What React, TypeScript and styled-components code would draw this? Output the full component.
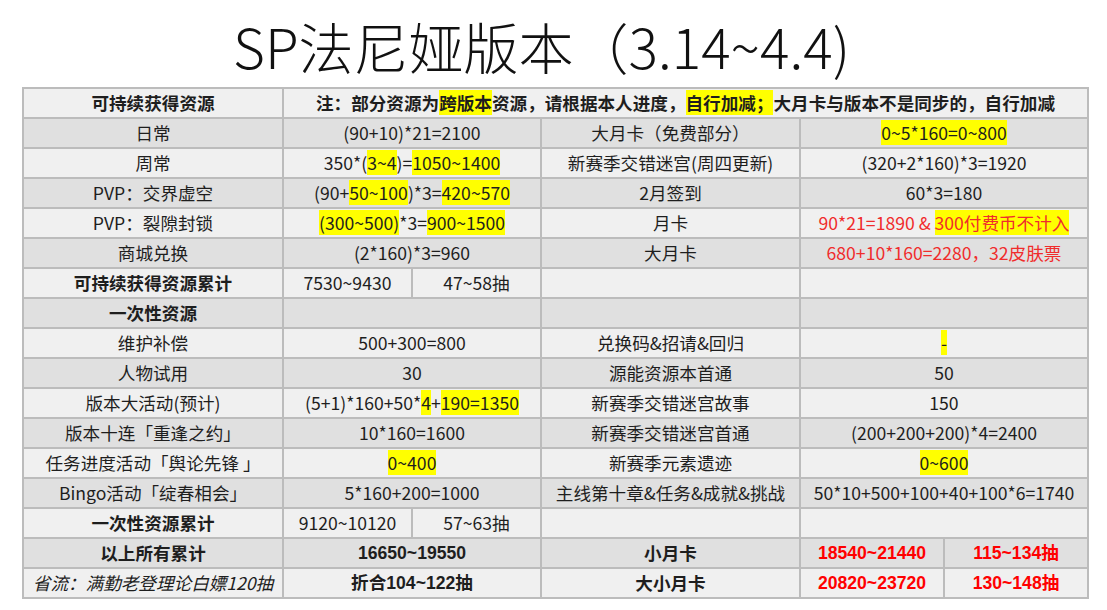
import React from "react";
import styled, { createGlobalStyle } from "styled-components";

const Global = createGlobalStyle`
  html, body { margin: 0; padding: 0; background: #ffffff; }
  body { font-family: "Noto Sans CJK SC", "Noto Sans", sans-serif; color: #1e1e1e; }
`;

const Page = styled.div`
  width: 1107px;
  height: 610px;
  overflow: hidden;
  background: #ffffff;
`;

const Title = styled.h1`
  box-sizing: border-box;
  margin: 0;
  height: 87px;
  padding: 12px 6px 0 0;
  width: 1089px;
  text-align: center;
  font-family: "Noto Sans CJK SC", sans-serif;
  font-weight: 300;
  font-size: 55px;
  line-height: 66px;
  color: #111;
`;

const Grid = styled.div`
  margin-left: 22px;
  display: grid;
  width: fit-content;
  grid-template-columns: 258px 127px 127px 257px 142px 142px;
  grid-auto-rows: 28px;
  gap: 2px;
  padding: 2px;
  background: #bcbcbc;
`;

type Tone = "none" | "soft" | "bright";

const Cell = styled.div<{
  $span: number;
  $dark: boolean;
  $bold: boolean;
  $italic: boolean;
  $tone: Tone;
  $latin: boolean;
}>`
  grid-column: span ${(p) => p.$span};
  display: flex;
  align-items: center;
  justify-content: center;
  white-space: nowrap;
  overflow: hidden;
  background: ${(p) => (p.$dark ? "#e0e0e0" : "#f0f0f0")};
  font-family: ${(p) =>
    p.$latin
      ? `"Liberation Sans", "Noto Sans CJK SC", sans-serif`
      : `"Noto Sans CJK SC", sans-serif`};
  font-size: 17.6px;
  line-height: 20px;
  font-weight: ${(p) => (p.$bold ? 700 : 400)};
  font-style: ${(p) => (p.$italic ? "italic" : "normal")};
  color: ${(p) =>
    p.$tone === "bright" ? "#ff0000" : p.$tone === "soft" ? "#f02c2c" : "#1e1e1e"};
`;

const Text = styled.span`
  white-space: pre;
`;

const Mark = styled.span`
  background: #ffff00;
`;

type Seg = string | { h: string };
type CellDef = {
  t: Seg[] | string;
  span?: number;
  bold?: boolean;
  italic?: boolean;
  tone?: Tone;
  latin?: boolean;
};

const c = (t: Seg[] | string, o: Partial<CellDef> = {}): CellDef => ({ t, ...o });
const h = (s: string) => ({ h: s });

const rows: CellDef[][] = [
  [
    c("可持续获得资源", { bold: true }),
    c(
      [
        "注：部分资源为",
        h("跨版本"),
        "资源，请根据本人进度，",
        h("自行加减；"),
        "大月卡与版本不是同步的，自行加减",
      ],
      { span: 5, bold: true }
    ),
  ],
  [c("日常"), c("(90+10)*21=2100", { span: 2 }), c("大月卡（免费部分）"), c([h("0~5*160=0~800")], { span: 2 })],
  [
    c("周常"),
    c(["350*(", h("3~4"), ")=", h("1050~1400")], { span: 2 }),
    c("新赛季交错迷宫(周四更新)"),
    c("(320+2*160)*3=1920", { span: 2 }),
  ],
  [
    c("PVP：交界虚空"),
    c(["(90+", h("50~100"), ")*3=", h("420~570")], { span: 2 }),
    c("2月签到"),
    c("60*3=180", { span: 2 }),
  ],
  [
    c("PVP：裂隙封锁"),
    c([h("(300~500)"), "*3=", h("900~1500")], { span: 2 }),
    c("月卡"),
    c(["90*21=1890 & ", h("300付费币不计入")], { span: 2, tone: "soft" }),
  ],
  [
    c("商城兑换"),
    c("(2*160)*3=960", { span: 2 }),
    c("大月卡"),
    c("680+10*160=2280，32皮肤票", { span: 2, tone: "soft" }),
  ],
  [c("可持续获得资源累计", { bold: true }), c("7530~9430"), c("47~58抽"), c(""), c("", { span: 2 })],
  [c("一次性资源", { bold: true }), c("", { span: 2 }), c(""), c("", { span: 2 })],
  [c("维护补偿"), c("500+300=800", { span: 2 }), c("兑换码&招请&回归"), c([h("-")], { span: 2 })],
  [c("人物试用"), c("30", { span: 2 }), c("源能资源本首通"), c("50", { span: 2 })],
  [
    c("版本大活动(预计)"),
    c(["(5+1)*160+50*", h("4"), "+", h("190=1350")], { span: 2 }),
    c("新赛季交错迷宫故事"),
    c("150", { span: 2 }),
  ],
  [
    c("版本十连「重逢之约」"),
    c("10*160=1600", { span: 2 }),
    c("新赛季交错迷宫首通"),
    c("(200+200+200)*4=2400", { span: 2 }),
  ],
  [
    c("任务进度活动「舆论先锋 」"),
    c([h("0~400")], { span: 2 }),
    c("新赛季元素遗迹"),
    c([h("0~600")], { span: 2 }),
  ],
  [
    c("Bingo活动「绽春相会」"),
    c("5*160+200=1000", { span: 2 }),
    c("主线第十章&任务&成就&挑战"),
    c("50*10+500+100+40+100*6=1740", { span: 2 }),
  ],
  [c("一次性资源累计", { bold: true }), c("9120~10120"), c("57~63抽"), c(""), c("", { span: 2 })],
  [
    c("以上所有累计", { bold: true }),
    c("16650~19550", { span: 2, bold: true, latin: true }),
    c("小月卡", { bold: true }),
    c("18540~21440", { bold: true, tone: "bright", latin: true }),
    c("115~134抽", { bold: true, tone: "bright", latin: true }),
  ],
  [
    c("省流：满勤老登理论白嫖120抽", { italic: true }),
    c("折合104~122抽", { span: 2, bold: true, latin: true }),
    c("大小月卡", { bold: true }),
    c("20820~23720", { bold: true, tone: "bright", latin: true }),
    c("130~148抽", { bold: true, tone: "bright", latin: true }),
  ],
];

const renderSegs = (t: Seg[] | string) => (
  <Text>
    {typeof t === "string"
      ? t
      : t.map((s, i) =>
          typeof s === "string" ? <React.Fragment key={i}>{s}</React.Fragment> : <Mark key={i}>{s.h}</Mark>
        )}
  </Text>
);

export default function App() {
  return (
    <Page>
      <Global />
      <Title>SP法尼娅版本（3.14~4.4)</Title>
      <Grid>
        {rows.map((row, ri) =>
          row.map((cell, ci) => (
            <Cell
              key={`${ri}-${ci}`}
              $span={cell.span ?? 1}
              $dark={ri % 2 === 1}
              $bold={!!cell.bold}
              $italic={!!cell.italic}
              $tone={cell.tone ?? "none"}
              $latin={!!cell.latin}
            >
              {renderSegs(cell.t)}
            </Cell>
          ))
        )}
      </Grid>
    </Page>
  );
}
